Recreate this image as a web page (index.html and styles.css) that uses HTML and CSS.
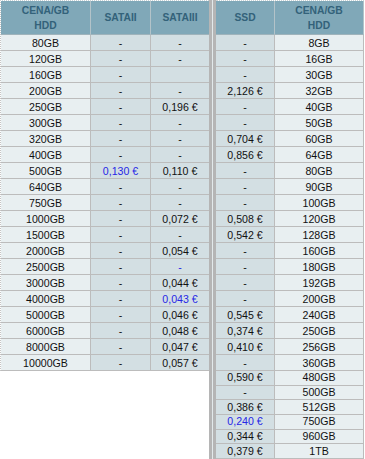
FILE: index.html
```html
<!DOCTYPE html>
<html>
<head>
<meta charset="utf-8">
<link rel="stylesheet" href="styles.css">
</head>
<body>
<div class="wrap">
  <table class="tbl left">
    <thead>
      <tr>
        <th class="c1">CENA/GB<br>HDD</th>
        <th class="c2">SATAII</th>
        <th class="c3">SATAIII</th>
      </tr>
    </thead>
    <tbody>
      <tr><td class="lt">80GB</td><td>-</td><td>-</td></tr>
      <tr><td class="lt">120GB</td><td>-</td><td>-</td></tr>
      <tr><td class="lt">160GB</td><td>-</td><td></td></tr>
      <tr><td class="lt">200GB</td><td>-</td><td>-</td></tr>
      <tr><td class="lt">250GB</td><td>-</td><td>0,196 €</td></tr>
      <tr><td class="lt">300GB</td><td>-</td><td>-</td></tr>
      <tr><td class="lt">320GB</td><td>-</td><td>-</td></tr>
      <tr><td class="lt">400GB</td><td>-</td><td>-</td></tr>
      <tr><td class="lt">500GB</td><td class="best">0,130 €</td><td>0,110 €</td></tr>
      <tr><td class="lt">640GB</td><td>-</td><td>-</td></tr>
      <tr><td class="lt">750GB</td><td>-</td><td>-</td></tr>
      <tr><td class="lt">1000GB</td><td>-</td><td>0,072 €</td></tr>
      <tr><td class="lt">1500GB</td><td>-</td><td>-</td></tr>
      <tr><td class="lt">2000GB</td><td>-</td><td>0,054 €</td></tr>
      <tr><td class="lt">2500GB</td><td>-</td><td class="best">-</td></tr>
      <tr><td class="lt">3000GB</td><td>-</td><td>0,044 €</td></tr>
      <tr><td class="lt">4000GB</td><td>-</td><td class="best">0,043 €</td></tr>
      <tr><td class="lt">5000GB</td><td>-</td><td>0,046 €</td></tr>
      <tr><td class="lt">6000GB</td><td>-</td><td>0,048 €</td></tr>
      <tr><td class="lt">8000GB</td><td>-</td><td>0,047 €</td></tr>
      <tr><td class="lt">10000GB</td><td>-</td><td>0,057 €</td></tr>
    </tbody>
  </table>
  <div class="sep"><span class="bar"></span><span class="gap"></span><span class="bar"></span></div>
  <table class="tbl right">
    <thead>
      <tr>
        <th class="c4">SSD</th>
        <th class="c5">CENA/GB<br>HDD</th>
      </tr>
    </thead>
    <tbody>
      <tr><td>-</td><td class="lt">8GB</td></tr>
      <tr><td>-</td><td class="lt">16GB</td></tr>
      <tr><td>-</td><td class="lt">30GB</td></tr>
      <tr><td>2,126 €</td><td class="lt">32GB</td></tr>
      <tr><td>-</td><td class="lt">40GB</td></tr>
      <tr><td>-</td><td class="lt">50GB</td></tr>
      <tr><td>0,704 €</td><td class="lt">60GB</td></tr>
      <tr><td>0,856 €</td><td class="lt">64GB</td></tr>
      <tr><td>-</td><td class="lt">80GB</td></tr>
      <tr><td>-</td><td class="lt">90GB</td></tr>
      <tr><td>-</td><td class="lt">100GB</td></tr>
      <tr><td>0,508 €</td><td class="lt">120GB</td></tr>
      <tr><td>0,542 €</td><td class="lt">128GB</td></tr>
      <tr><td>-</td><td class="lt">160GB</td></tr>
      <tr><td>-</td><td class="lt">180GB</td></tr>
      <tr><td>-</td><td class="lt">192GB</td></tr>
      <tr><td>-</td><td class="lt">200GB</td></tr>
      <tr><td>0,545 €</td><td class="lt">240GB</td></tr>
      <tr><td>0,374 €</td><td class="lt">250GB</td></tr>
      <tr><td>0,410 €</td><td class="lt">256GB</td></tr>
      <tr><td>-</td><td class="lt">360GB</td></tr>
      <tr class="short"><td>0,590 €</td><td class="lt">480GB</td></tr>
      <tr class="short"><td>-</td><td class="lt">500GB</td></tr>
      <tr class="short"><td>0,386 €</td><td class="lt">512GB</td></tr>
      <tr class="short"><td class="best">0,240 €</td><td class="lt">750GB</td></tr>
      <tr class="short"><td>0,344 €</td><td class="lt">960GB</td></tr>
      <tr class="short"><td>0,379 €</td><td class="lt">1TB</td></tr>
    </tbody>
  </table>
</div>
</body>
</html>
```

FILE: styles.css
```css
html, body {
  margin: 0;
  padding: 0;
  background: #ffffff;
}

.wrap {
  display: flex;
  align-items: stretch;
  font-family: "Liberation Sans", Arial, sans-serif;
}

.tbl {
  border-collapse: separate;
  border-spacing: 0;
  table-layout: fixed;
  border-top: 1px dotted #c9d3d7;
  align-self: flex-start;
}

.left {
  width: 209px;
  border-left: 1px dotted #c4c4c4;
  border-bottom: 0;
}

.right {
  width: 148px;
}

.tbl th,
.tbl td {
  box-sizing: border-box;
  padding: 0;
  text-align: center;
  border-right: 1px solid #bcbcbc;
  border-bottom: 1px solid #bcbcbc;
  overflow: hidden;
  white-space: nowrap;
}

.tbl th {
  height: 34px;
  background: #80a8b8;
  color: #33627a;
  font-size: 10.3px;
  font-weight: bold;
  line-height: 15px;
  border-right-color: #b3c3c9;
  border-bottom-color: #9fb3bb;
  vertical-align: middle;
}

.tbl td {
  height: 16px;
  font-size: 10.6px;
  line-height: 14px;
  color: #111111;
  background: #d3dfe3;
  vertical-align: middle;
}

.tbl td.lt {
  background: #e8eff1;
}

.tbl td.best {
  color: #2727e6;
}

.c1 { width: 90px; }
.c2 { width: 60px; }
.c3 { width: 58px; }
.left .c3,
.left td:last-child {
  border-right: 0;
}

.c4 { width: 59px; }
.c5 { width: 89px; }

.right tr.short td {
  height: 14.667px;
  line-height: 13px;
}

.sep {
  display: flex;
  width: 7px;
  flex: none;
}

.sep .bar {
  width: 3px;
  background: #b5b5b5;
}

.sep .gap {
  width: 1px;
  background: #e2e9eb;
}
```
